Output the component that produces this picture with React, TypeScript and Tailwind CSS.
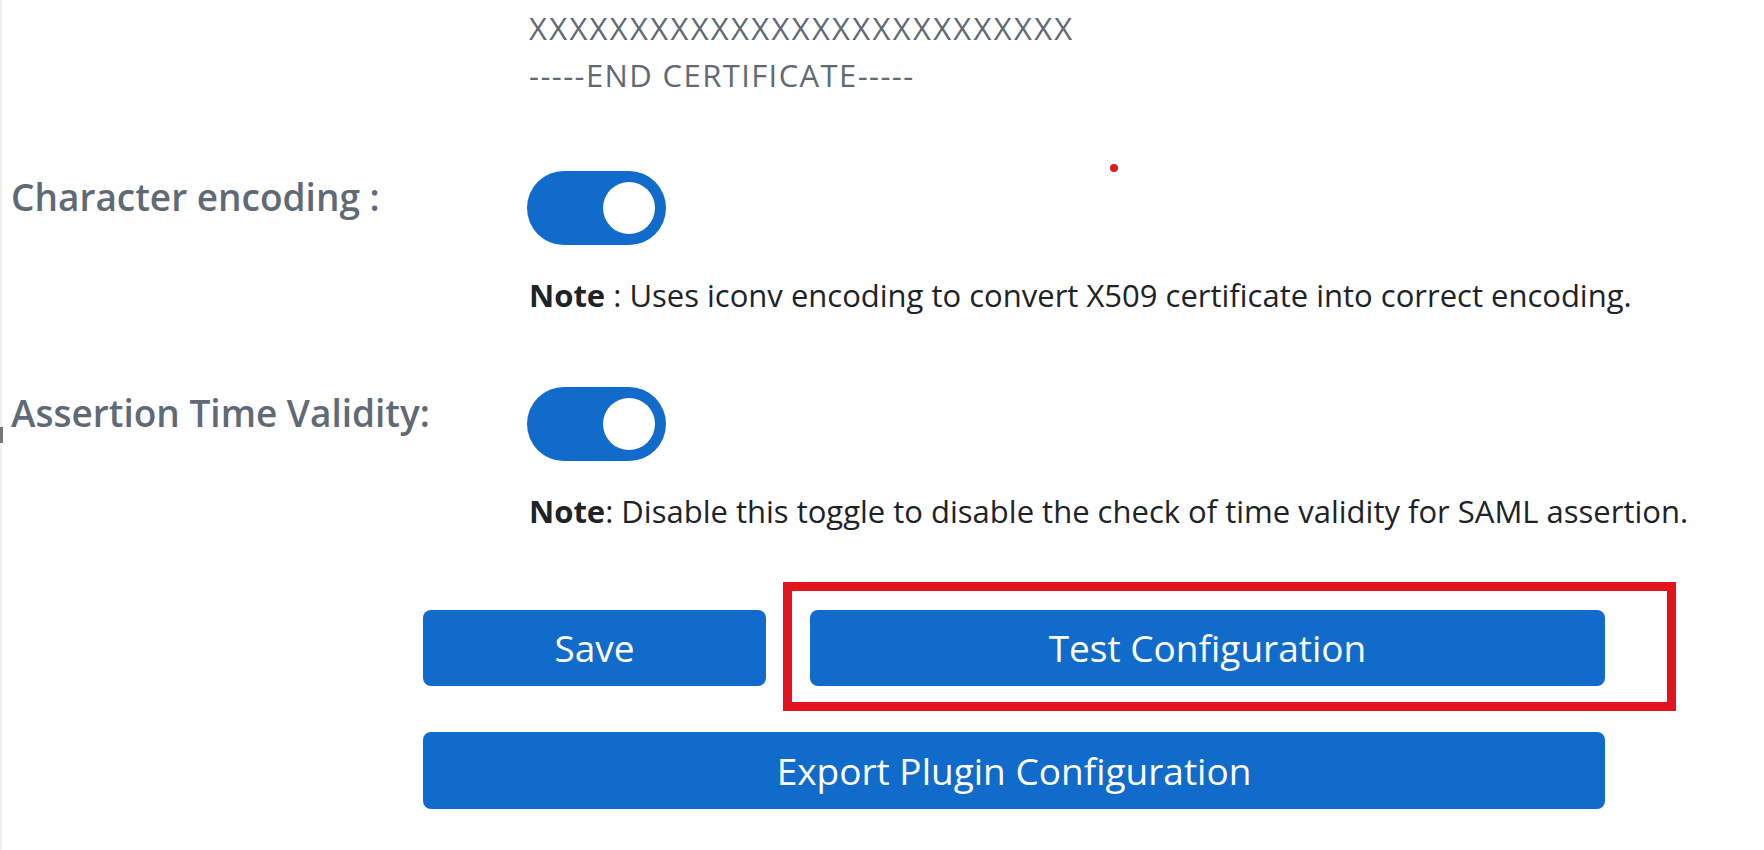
import React from 'react';

const Toggle = () => (
  <div className="flex h-[74px] w-[139px] items-center justify-end rounded-full bg-[#106bcb] pr-[11px]">
    <div className="h-[52px] w-[52px] rounded-full bg-white" />
  </div>
);

const Row = ({ label, note, noteLead }: { label: string; note: string; noteLead: string }) => (
  <div className="flex">
    <div className="w-[527px] shrink-0 pl-[11px] text-[37px] leading-[52px] font-semibold text-[#5f6a76]">
      {label}
    </div>
    <div className="flex flex-col">
      <Toggle />
      <p className="mt-[30px] text-[31px] leading-[40px] text-[#1d2327] pl-[2px] whitespace-nowrap">
        <span className="font-bold">{noteLead}</span>
        {note}
      </p>
    </div>
  </div>
);

export default function App() {
  return (
    <div className="relative h-[850px] w-[1764px] overflow-hidden bg-white font-['Open_Sans','Noto_Sans',sans-serif]">
      {/* faint left edge */}
      <div className="absolute left-0 top-0 h-full w-[2px] bg-[#f1f1f1]" />
      <div className="absolute left-0 top-[427px] h-[16px] w-[3px] bg-[#777]" />

      <div className="pl-[529px] pt-[5px] text-[31px] leading-[47px] text-[#5f6a75]">
        <div className="tracking-[2.3px]">XXXXXXXXXXXXXXXXXXXXXXXXXXX</div>
        <div className="tracking-[1.4px]">-----END CERTIFICATE-----</div>
      </div>

      {/* red dot */}
      <div className="absolute left-[1110px] top-[164px] h-[8px] w-[8px] rounded-full bg-[#e01b1b]" />

      <div className="mt-[72px]">
        <Row
          label="Character encoding :"
          noteLead="Note"
          note=" : Uses iconv encoding to convert X509 certificate into correct encoding."
        />
      </div>
      <div className="mt-[72px]">
        <Row
          label="Assertion Time Validity:"
          noteLead="Note"
          note=": Disable this toggle to disable the check of time validity for SAML assertion."
        />
      </div>

      <div className="ml-[423px] mt-[79px] flex w-[1182px] flex-col gap-[46px]">
        <div className="flex gap-[44px]">
          <button className="h-[76px] w-[343px] rounded-[8px] bg-[#106bcb] text-[37px] text-white">Save</button>
          <div className="relative flex-1">
            <button className="h-[76px] w-full rounded-[8px] bg-[#106bcb] text-[37px] text-white">
              Test Configuration
            </button>
            <div className="pointer-events-none absolute -left-[27px] -top-[28px] h-[129px] w-[893px] border-[9px] border-[#e3141e]" />
          </div>
        </div>
        <button className="h-[77px] w-full rounded-[8px] bg-[#106bcb] text-[37px] text-white">
          Export Plugin Configuration
        </button>
      </div>
    </div>
  );
}
